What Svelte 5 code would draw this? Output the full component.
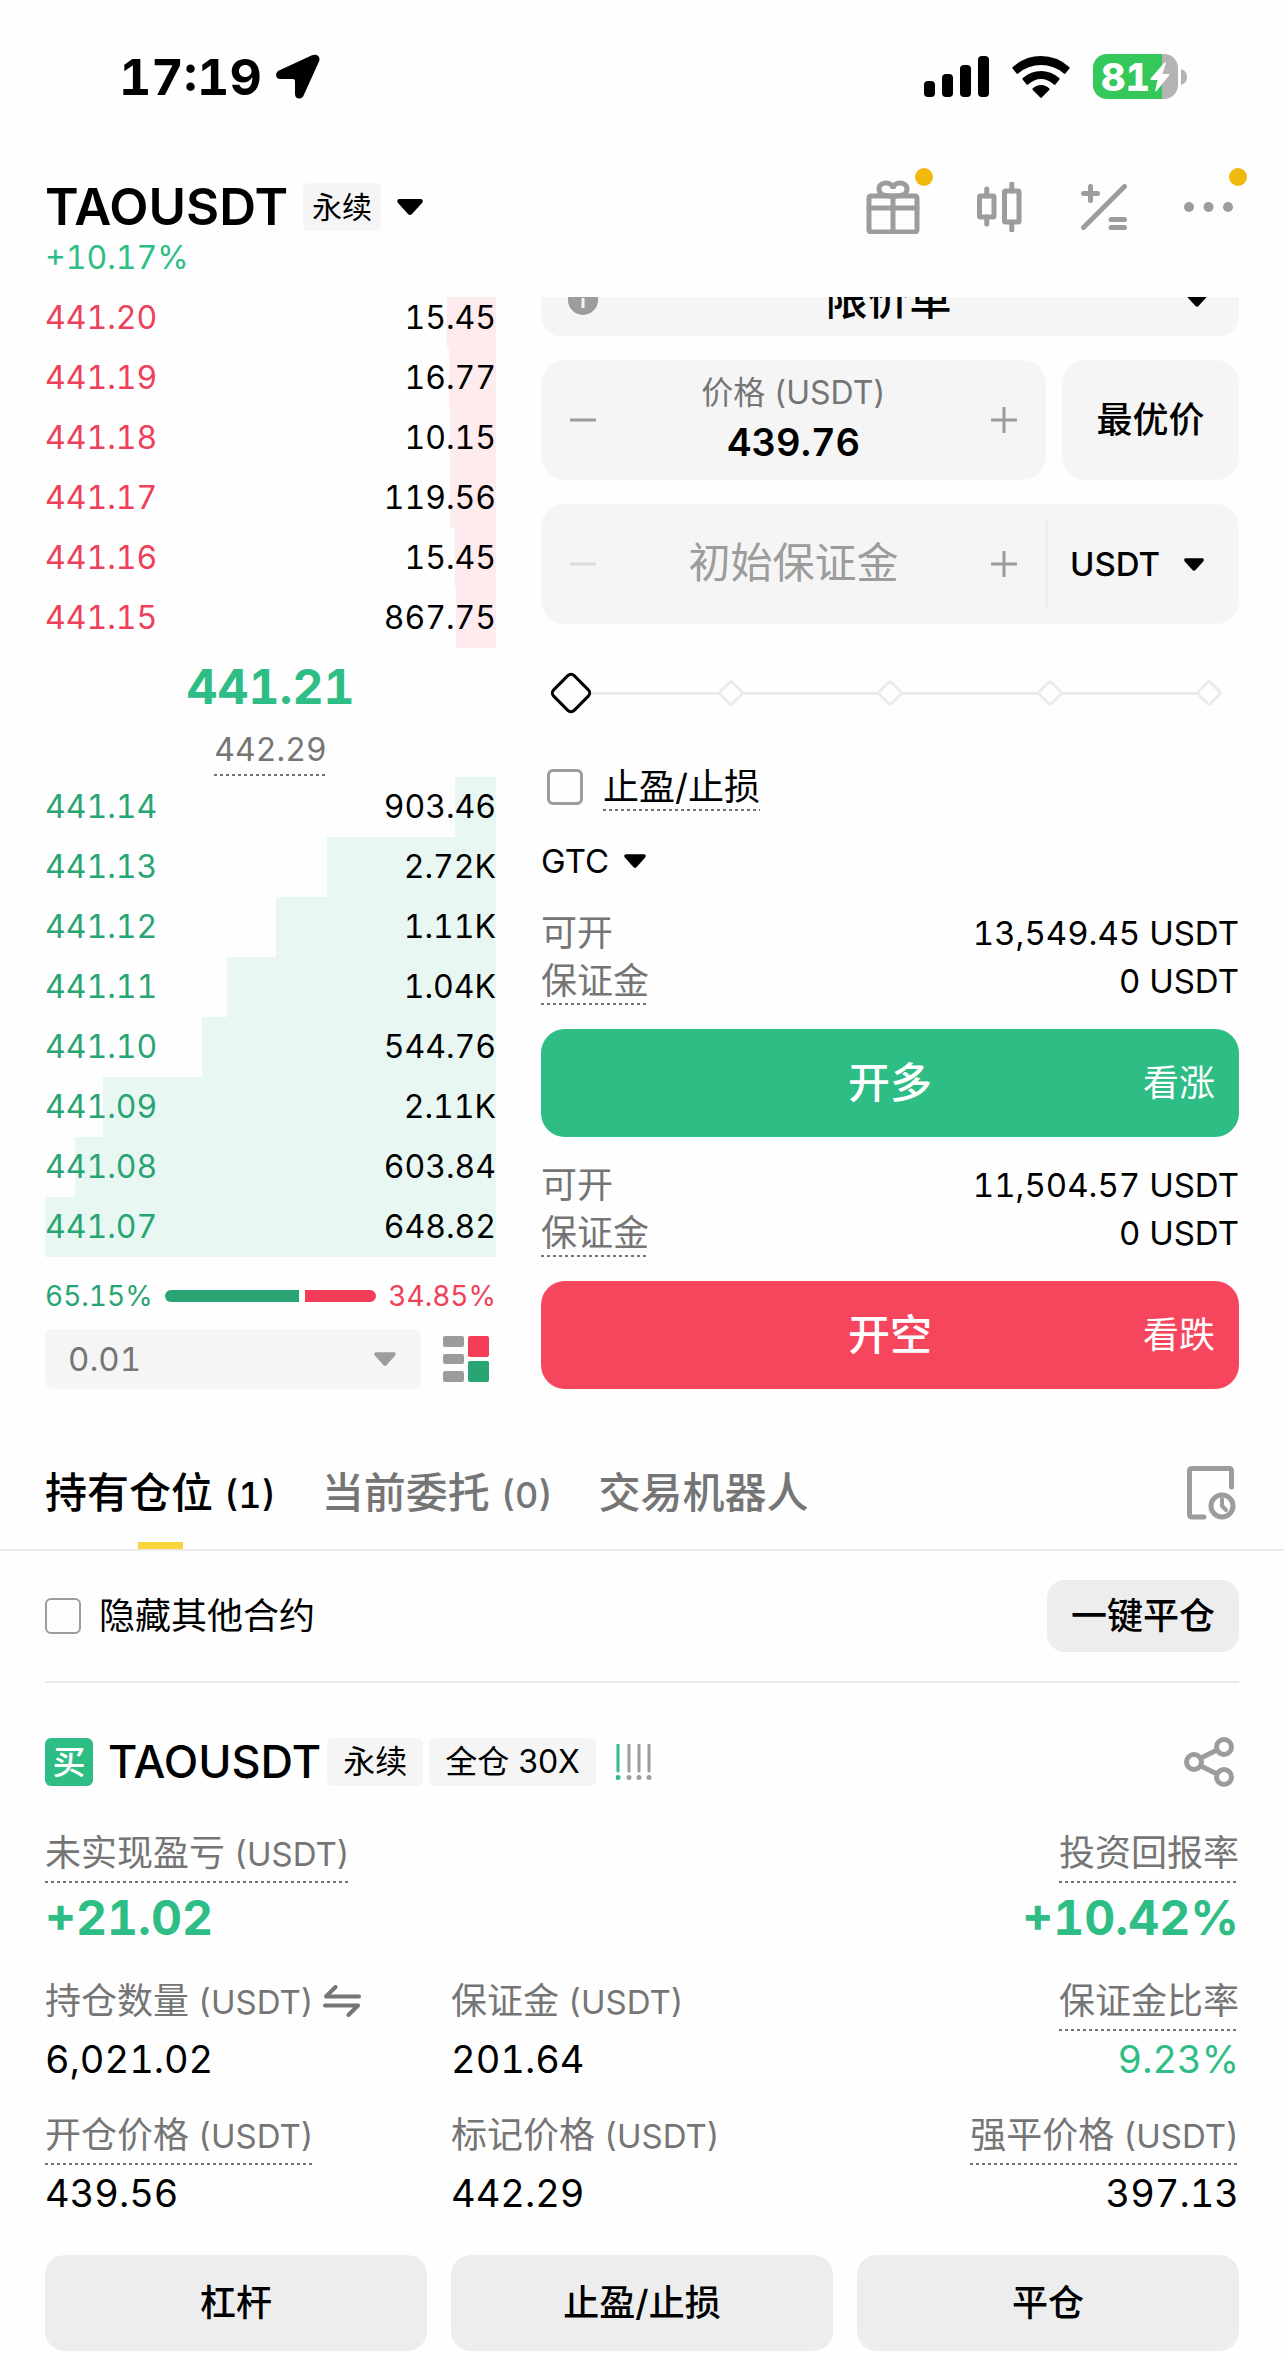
<script lang="ts">
	interface Level {
		price: string;
		amount: string;
		depth: number;
	}

	interface Stat {
		label: string;
		unit?: string;
		value: string;
		hint?: boolean;
		swap?: boolean;
		up?: boolean;
	}

	const asks: Level[] = [
		{ price: '441.20', amount: '15.45', depth: 10.9 },
		{ price: '441.19', amount: '16.77', depth: 10.6 },
		{ price: '441.18', amount: '10.15', depth: 10.4 },
		{ price: '441.17', amount: '119.56', depth: 10.4 },
		{ price: '441.16', amount: '15.45', depth: 9.1 },
		{ price: '441.15', amount: '867.75', depth: 8.9 }
	];

	const bids: Level[] = [
		{ price: '441.14', amount: '903.46', depth: 9.3 },
		{ price: '441.13', amount: '2.72K', depth: 37.5 },
		{ price: '441.12', amount: '1.11K', depth: 48.8 },
		{ price: '441.11', amount: '1.04K', depth: 59.6 },
		{ price: '441.10', amount: '544.76', depth: 65.2 },
		{ price: '441.09', amount: '2.11K', depth: 87.1 },
		{ price: '441.08', amount: '603.84', depth: 93.4 },
		{ price: '441.07', amount: '648.82', depth: 100 }
	];

	const sides = [
		{ type: 'long', available: '13,549.45 USDT', margin: '0 USDT', text: '开多', note: '看涨' },
		{ type: 'short', available: '11,504.57 USDT', margin: '0 USDT', text: '开空', note: '看跌' }
	];

	const tabs = [
		{ text: '持有仓位', count: '(1)' },
		{ text: '当前委托', count: '(0)' },
		{ text: '交易机器人', count: '' }
	];

	const stats: Stat[] = [
		{ label: '持仓数量', unit: '(USDT)', value: '6,021.02', swap: true },
		{ label: '保证金', unit: '(USDT)', value: '201.64' },
		{ label: '保证金比率', value: '9.23%', hint: true, up: true },
		{ label: '开仓价格', unit: '(USDT)', value: '439.56', hint: true },
		{ label: '标记价格', unit: '(USDT)', value: '442.29' },
		{ label: '强平价格', unit: '(USDT)', value: '397.13', hint: true }
	];

	const buyRatio = 65.15;
	const sellRatio = 34.85;

	let activeTab = $state(0);
	let price = $state('439.76');
	let margin = $state('');
	let percent = $state(0);
	let hasTpSl = $state(false);
	let hideOthers = $state(false);

	function stepPrice(delta: number) {
		price = (Number(price) + delta).toFixed(2);
	}

	function stepMargin(delta: number) {
		margin = String(Math.max(0, Number(margin) + delta));
	}
</script>

{#snippet caret(width: number, height: number)}
	<svg class="caret" {width} {height} viewBox="0 0 26 16" aria-hidden="true">
		<path d="M2 0h22q3 1 1 4l-10 11q-2 2-4 0l-10-11q-2-3 1-4z" />
	</svg>
{/snippet}

{#snippet minus()}
	<svg width="26" height="26" viewBox="0 0 26 26" aria-hidden="true">
		<path d="M1 13h24" />
	</svg>
{/snippet}

{#snippet plus()}
	<svg width="26" height="26" viewBox="0 0 26 26" aria-hidden="true">
		<path d="M1 13h24M13 1v24" />
	</svg>
{/snippet}

{#snippet levels(rows: Level[], type: string)}
	<table class="levels {type}">
		<tbody>
			{#each rows as { price, amount, depth }}
				<tr style="--depth: {depth}%">
					<td class="price">{price}</td>
					<td class="amount">{amount}</td>
				</tr>
			{/each}
		</tbody>
	</table>
{/snippet}

<div class="status">
	<div class="clock">
		<span>17:19</span>
		<svg width="44" height="45" viewBox="0 0 44 45" aria-hidden="true">
			<path
				d="M36 1.2 3 16.6C-1.5 18.8-.6 25 4.2 25H17q2 0 2 2v13c0 5.600 6.600 6 8.600 1.400L43 7.600C45 3 41-.8 36 1.200z"
			/>
		</svg>
	</div>
	<div class="signals">
		<svg width="65" height="41" viewBox="0 0 65 41" aria-hidden="true">
			<rect x="0" y="25" width="11" height="16" rx="4" />
			<rect x="18" y="18" width="11" height="23" rx="4" />
			<rect x="36" y="9" width="11" height="32" rx="4" />
			<rect x="54" y="0" width="11" height="41" rx="4" />
		</svg>
		<svg width="58" height="42" viewBox="0 0 58 42" aria-hidden="true">
			<path d="M.6 12.500Q0 11.800.8 11 13 0 29 0t28.200 11q.8.800.2 1.500l-4 5q-.7.800-1.500 0Q42 9 29 9T6.100 17.500q-.8.800-1.500 0z" />
			<path d="M10.600 23.600q-.6-.8.200-1.500Q19 15 29 15t18.200 7.100q.8.700.2 1.500l-4 5q-.7.800-1.500 0Q36 23 29 23t-12.900 5.600q-.8.800-1.500 0z" />
			<path d="M20.600 33.800q-.5-.6.100-1.200Q24 29 29 29t8.300 3.600q.6.600.1 1.200l-7.400 7.500q-1 1-2 0z" />
		</svg>
		<div class="power">
			<div class="battery">
				<span>81</span>
				<svg width="20" height="30" viewBox="0 0 20 30" aria-hidden="true">
					<path d="M14.500.5q1.500-1 1.300.8L12.500 12H18.500q1.500.2.600 1.500L6.500 29q-1.500 1.200-1.200-.7L7.500 18H1.300Q-.2 17.700.8 16.300z" />
				</svg>
			</div>
			<svg width="6" height="16" viewBox="0 0 6 16" aria-hidden="true">
				<path d="M0 0q6 2 6 8t-6 8z" fill="#b3b3b3" />
			</svg>
		</div>
	</div>
</div>

<header>
	<div class="pair">
		<h1>TAOUSDT</h1>
		<span class="tag small">永续</span>
		<button type="button" class="plain" aria-label="切换合约">{@render caret(26, 16)}</button>
	</div>
	<div class="tools">
		<button type="button" class="plain badged" aria-label="活动">
			<svg width="54" height="54" viewBox="0 0 54 54" aria-hidden="true">
				<rect x="3" y="16" width="48" height="36" rx="2" />
				<path d="M3 28h48M27 16v36M27 16c-6 0-14 0-14-7 0-8 14-8 14 0 0-8 14-8 14 0 0 7-8 7-14 7z" />
			</svg>
		</button>
		<button type="button" class="plain" aria-label="K线">
			<svg width="47" height="50" viewBox="0 0 47 50" aria-hidden="true">
				<rect x="2.500" y="14" width="14.500" height="21" rx="1" />
				<rect x="27.500" y="9" width="14.500" height="31" rx="1" />
				<path d="M9.750 7v7M9.750 35v7M34.750 2v7M34.750 40v8" />
			</svg>
		</button>
		<button type="button" class="plain" aria-label="计算器">
			<svg width="46" height="46" viewBox="0 0 46 46" aria-hidden="true">
				<path d="M2.500 43.500 43.500 2.500M9.500 2.500v14M2.500 9.500h14M30 35.500h13.500M30 43.500h13.500" />
			</svg>
		</button>
		<button type="button" class="plain badged" aria-label="更多">
			<svg class="dots" width="50" height="10" viewBox="0 0 50 10" aria-hidden="true">
				<circle cx="5" cy="5" r="5" />
				<circle cx="24.500" cy="5" r="5" />
				<circle cx="44" cy="5" r="5" />
			</svg>
		</button>
	</div>
	<p class="change">+10.17%</p>
</header>

<main>
	<div class="trade">
		<section class="book" aria-label="盘口">
			{@render levels(asks, 'ask')}
			<div class="mid">
				<strong>441.21</strong>
				<span class="hint">442.29</span>
			</div>
			{@render levels(bids, 'bid')}
			<div class="ratio">
				<span class="buy">{buyRatio}%</span>
				<div class="bar">
					<i class="buy" style="flex-grow: {buyRatio}"></i>
					<i class="sell" style="flex-grow: {sellRatio}"></i>
				</div>
				<span class="sell">{sellRatio}%</span>
			</div>
			<div class="precision">
				<label class="dropdown">
					<select aria-label="价格精度">
						<option>0.01</option>
					</select>
					{@render caret(22, 14)}
				</label>
				<button type="button" class="plain" aria-label="盘口样式">
					<svg width="46" height="46" viewBox="0 0 46 46" aria-hidden="true">
						<g fill="#9c9c9c">
							<rect x="0" y="0" width="21" height="11" rx="2" />
							<rect x="0" y="18" width="21" height="10" rx="2" />
							<rect x="0" y="35" width="21" height="11" rx="2" />
						</g>
						<rect x="25" y="0" width="21" height="21" rx="2" fill="#f63d57" />
						<rect x="25" y="25" width="21" height="21" rx="2" fill="#29a573" />
					</svg>
				</button>
			</div>
		</section>

		<form class="order" onsubmit={(event) => event.preventDefault()}>
			<label class="dropdown type">
				<svg width="30" height="30" viewBox="0 0 30 30" aria-hidden="true">
					<circle cx="15" cy="15" r="15" fill="#9c9c9c" />
					<path d="M15 7v3M15 13v10" stroke="#f5f5f5" stroke-width="3" />
				</svg>
				<select aria-label="委托类型">
					<option>限价单</option>
				</select>
				{@render caret(20, 13)}
			</label>

			<div class="price-row">
				<div class="stepper">
					<button type="button" class="plain" aria-label="减" onclick={() => stepPrice(-0.01)}>
						{@render minus()}
					</button>
					<div class="field">
						<label for="price">价格 (USDT)</label>
						<input id="price" type="text" inputmode="decimal" bind:value={price} />
					</div>
					<button type="button" class="plain" aria-label="加" onclick={() => stepPrice(0.01)}>
						{@render plus()}
					</button>
				</div>
				<button type="button" class="best">最优价</button>
			</div>

			<div class="margin-row">
				<div class="stepper">
					<button
						type="button"
						class="plain"
						aria-label="减"
						disabled={margin === ''}
						onclick={() => stepMargin(-1)}
					>
						{@render minus()}
					</button>
					<div class="field">
						<input
							type="text"
							inputmode="decimal"
							aria-label="初始保证金"
							placeholder="初始保证金"
							bind:value={margin}
						/>
					</div>
					<button type="button" class="plain" aria-label="加" onclick={() => stepMargin(1)}>
						{@render plus()}
					</button>
				</div>
				<label class="dropdown unit">
					<select aria-label="单位">
						<option>USDT</option>
					</select>
					{@render caret(20, 13)}
				</label>
			</div>

			<div class="slider">
				<div class="marks">
					{#each [0, 25, 50, 75, 100] as mark (mark)}
						<i></i>
					{/each}
				</div>
				<input type="range" min="0" max="100" aria-label="仓位比例" bind:value={percent} />
			</div>

			<div class="check">
				<input id="tpsl" type="checkbox" bind:checked={hasTpSl} />
				<label for="tpsl" class="hint">止盈/止损</label>
			</div>

			<label class="dropdown force">
				<select aria-label="有效方式">
					<option>GTC</option>
				</select>
				{@render caret(22, 14)}
			</label>

			{#each sides as { type, available, margin, text, note }}
				<dl>
					<div>
						<dt>可开</dt>
						<dd>{available}</dd>
					</div>
					<div>
						<dt class="hint">保证金</dt>
						<dd>{margin}</dd>
					</div>
				</dl>
				<button type="button" class="submit {type}">
					<span>{text}</span>
					<small>{note}</small>
				</button>
			{/each}
		</form>
	</div>

	<nav>
		{#each tabs as { text, count }, index}
			<button
				type="button"
				class="tab"
				class:active={activeTab === index}
				onclick={() => (activeTab = index)}
			>
				{text}
				{#if count}<span class="count">{count}</span>{/if}
			</button>
		{/each}
		<button type="button" class="plain history" aria-label="历史记录">
			<svg width="50" height="54" viewBox="0 0 50 54" aria-hidden="true">
				<path d="M18 51H6q-2.500 0-2.500-2.500V5Q3.500 2.500 6 2.500h37q2.500 0 2.500 2.500v16" />
				<circle cx="36" cy="40" r="11" />
				<path d="M36 33v7l4 4" stroke-width="4" />
			</svg>
		</button>
	</nav>

	<div class="filter">
		<div class="check thin">
			<input id="hide-others" type="checkbox" bind:checked={hideOthers} />
			<label for="hide-others">隐藏其他合约</label>
		</div>
		<button type="button" class="close-all">一键平仓</button>
	</div>

	<section class="position">
		<div class="title">
			<span class="side">买</span>
			<h2>TAOUSDT</h2>
			<span class="tag">永续</span>
			<span class="tag">全仓 30X</span>
			<svg width="36" height="36" viewBox="0 0 36 36" aria-hidden="true">
				{#each [2, 13, 23, 33] as x, index}
					<g class="risk" class:on={index === 0}>
						<path d="M{x} 1v26" />
						<circle cx={x} cy="33.500" r="2.500" />
					</g>
				{/each}
			</svg>
			<button type="button" class="plain share" aria-label="分享">
				<svg width="50" height="50" viewBox="0 0 50 50" aria-hidden="true">
					<circle cx="10" cy="25" r="7.500" />
					<circle cx="40" cy="10" r="7.500" />
					<circle cx="40" cy="40" r="7.500" />
					<path d="m17 21 16-8M17 29l16 8" />
				</svg>
			</button>
		</div>

		<div class="pnl">
			<div>
				<span class="label hint">未实现盈亏 <span class="latin">(USDT)</span></span>
				<strong>+21.02</strong>
			</div>
			<div>
				<span class="label hint">投资回报率</span>
				<strong>+10.42%</strong>
			</div>
		</div>

		<div class="stats">
			{#each stats as { label, unit, value, hint, swap, up }}
				<div class="stat">
					<span class="label" class:hint>
						{label}
						{#if unit}<span class="latin">{unit}</span>{/if}
						{#if swap}
							<svg width="38" height="32" viewBox="0 0 38 32" aria-hidden="true">
								<path d="M36 11.500H3L12.500 2M2 20.500h33L25.500 30" />
							</svg>
						{/if}
					</span>
					<span class="value" class:up>{value}</span>
				</div>
			{/each}
		</div>

		<div class="actions">
			<button type="button">杠杆</button>
			<button type="button">止盈/止损</button>
			<button type="button">平仓</button>
		</div>
	</section>
</main>

<style>
	:global(body) {
		--green: #2ebd85;
		--green-deep: #29a573;
		--red: #f6465d;
		--grey: #757575;
		--grey-light: #9c9c9c;
		--field: #f5f5f5;
		--button: #ededed;
		background-color: #fefefe;
		color: #000;
		font-family: Inter, 'Noto Sans CJK SC', sans-serif;
		font-size: 33px;
		font-variant-numeric: tabular-nums;
		line-height: 48px;
	}

	button,
	input,
	select {
		background: none;
		border: none;
		border-radius: 0;
		box-sizing: border-box;
		color: inherit;
		font: inherit;
		font-variant-numeric: tabular-nums;
		margin: 0;
		min-width: 0;
		outline: none;
		padding: 0;
	}

	select {
		appearance: none;
	}

	button {
		cursor: pointer;
	}

	h1,
	h2,
	p,
	dl,
	dd {
		margin: 0;
	}

	svg {
		display: block;
		flex: none;
	}

	.plain {
		display: flex;
		align-items: center;
	}

	.caret {
		fill: currentColor;
		pointer-events: none;
	}

	.latin {
		font-size: 33px;
		line-height: 1;
	}

	.hint {
		background: repeating-linear-gradient(to right, var(--grey) 0 3px, transparent 3px 6px) left
			bottom / 100% 2px no-repeat;
	}

	.status {
		display: flex;
		align-items: center;
		justify-content: space-between;
		height: 153px;
		padding: 0 97px 0 119px;
	}

	.clock {
		display: flex;
		align-items: center;
		gap: 14px;
		font-size: 50px;
		font-weight: 700;
	}

	.signals {
		display: flex;
		align-items: center;
		gap: 23px;
	}

	.power {
		display: flex;
		align-items: center;
		gap: 3px;
	}

	.battery {
		background: linear-gradient(to right, #34c759 81%, #b3b3b3 81%);
		border-radius: 14px;
		color: #fff;
		display: flex;
		align-items: center;
		justify-content: center;
		font-size: 38px;
		font-weight: 800;
		height: 45px;
		width: 85px;

		& svg {
			fill: #fff;
		}
	}

	header {
		display: grid;
		grid-template-columns: 1fr auto;
		padding: 30px 45px 12px;
	}

	.pair {
		display: flex;
		align-items: center;

		& .plain {
			margin-left: 16px;
		}
	}

	h1 {
		font-size: 51px;
		font-weight: 600;
		margin-right: 15px;
	}

	.tag {
		background-color: var(--field);
		border-radius: 6px;
		font-size: 32px;
		font-variant-numeric: normal;
		padding: 0 16px;

		&.small {
			font-size: 30px;
			padding: 0 9px;
		}
	}

	.tools {
		display: flex;
		align-items: center;
		gap: 57px;
		height: 48px;
		padding-right: 5px;

		& svg {
			fill: none;
			stroke: var(--grey-light);
			stroke-linecap: round;
			stroke-width: 5;
		}

		& .dots {
			fill: var(--grey-light);
			stroke: none;
		}
	}

	.badged {
		height: 48px;
		position: relative;

		&::after {
			background-color: #f0b90b;
			border-radius: 50%;
			content: '';
			height: 18px;
			position: absolute;
			right: -13px;
			top: -15px;
			width: 18px;
		}
	}

	.change {
		color: var(--green);
		font-size: 32px;
		line-height: 54px;
	}

	.trade {
		display: grid;
		grid-template-columns: minmax(0, 451fr) minmax(0, 698fr);
		gap: 45px;
		overflow: hidden;
		padding: 0 45px;
	}

	/* both columns are scrolled slightly under the header */
	.book {
		font-size: 32px;
		margin-top: -9px;
	}

	.levels {
		border-collapse: collapse;
		line-height: 60px;
		width: 100%;

		& tr {
			background: linear-gradient(to left, var(--depth-color) var(--depth), transparent var(--depth));
		}

		& td {
			padding: 0;
		}

		& .amount {
			text-align: right;
		}

		&.ask {
			--depth-color: #feebee;
		}

		&.bid {
			--depth-color: #e9f7f2;
		}

		&.ask .price {
			color: #ee4059;
		}

		&.bid .price {
			color: var(--green-deep);
		}
	}

	.mid {
		display: flex;
		flex-direction: column;
		align-items: center;
		padding-bottom: 1px;

		& strong {
			color: var(--green);
			font-size: 48px;
			font-weight: 700;
			line-height: 78px;
		}

		& span {
			color: var(--grey);
			padding-bottom: 2px;
		}
	}

	.ratio {
		display: flex;
		align-items: center;
		gap: 12px;
		font-size: 28px;
		line-height: 66px;
		margin-top: 6px;

		& span.buy {
			color: var(--green-deep);
		}

		& span.sell {
			color: #ee4059;
		}
	}

	.bar {
		display: flex;
		flex: 1;
		gap: 6px;

		& i {
			flex-basis: 0;
			height: 12px;
		}

		& .buy {
			background-color: var(--green-deep);
			border-radius: 6px 0 0 6px;
		}

		& .sell {
			background-color: #f63d57;
			border-radius: 0 6px 6px 0;
		}
	}

	.dropdown {
		display: flex;
		align-items: center;
	}

	.precision {
		display: flex;
		align-items: center;
		gap: 22px;
		padding-right: 7px;

		& .dropdown {
			background-color: var(--field);
			border-radius: 8px;
			color: var(--grey);
			flex: 1;
			font-size: 33px;
			height: 60px;
			padding: 0 25px 0 23px;
		}

		& select {
			flex: 1;
		}

		& .caret {
			color: var(--grey-light);
		}
	}

	.order {
		display: flex;
		flex-direction: column;
		margin-top: -33px;
	}

	.type {
		background-color: var(--field);
		border-radius: 20px;
		height: 72px;
		padding: 0 32px 0 27px;

		& select {
			flex: 1;
			font-size: 42px;
			font-weight: 500;
			line-height: 60px;
			margin-right: 8px;
			text-align: center;
			text-align-last: center;
		}
	}

	.price-row {
		display: grid;
		grid-template-columns: minmax(0, 505fr) minmax(0, 177fr);
		gap: 16px;
		margin: 24px 0;
	}

	.stepper,
	.best {
		background-color: var(--field);
		border-radius: 24px;
		height: 120px;
	}

	.best {
		font-size: 36px;
		font-weight: 500;
	}

	.stepper {
		display: flex;
		align-items: center;
		justify-content: space-between;
		padding: 0 29px;

		& svg {
			stroke: var(--grey-light);
			stroke-linecap: round;
			stroke-width: 3;
		}

		& button:disabled svg {
			stroke: #dcdcdc;
		}
	}

	.field {
		display: flex;
		flex: 1;
		flex-direction: column;
		min-width: 0;
		text-align: center;

		& label {
			color: var(--grey);
			font-size: 32px;
			line-height: 44px;
		}

		& input {
			font-size: 38px;
			font-weight: 600;
			height: 54px;
			text-align: center;
			width: 100%;
		}

		& input::placeholder {
			color: var(--grey-light);
			font-size: 42px;
			font-weight: 400;
			opacity: 1;
		}
	}

	.margin-row {
		background-color: var(--field);
		border-radius: 24px;
		display: grid;
		grid-template-columns: minmax(0, 505fr) minmax(0, 193fr);
		align-items: center;
	}

	.unit {
		border-left: 2px solid var(--button);
		font-weight: 500;
		height: 88px;
		justify-content: space-between;
		padding: 0 35px 0 22px;
	}

	.slider {
		align-items: center;
		display: grid;
		height: 48px;
		margin: 45px 14px 46px;

		& > * {
			grid-area: 1 / 1;
		}

		& input {
			appearance: none;
			width: 100%;
		}

		& input::-webkit-slider-thumb {
			appearance: none;
			background-color: #fefefe;
			border: 3px solid #000;
			border-radius: 6px;
			box-sizing: border-box;
			height: 32px;
			rotate: 45deg;
			width: 32px;
		}
	}

	.marks {
		background: linear-gradient(#ebebeb, #ebebeb) center / calc(100% - 32px) 3px no-repeat;
		display: flex;
		justify-content: space-between;
		padding: 0 6px;

		& i {
			background-color: #fefefe;
			border: 3px solid #ebebeb;
			border-radius: 4px;
			box-sizing: border-box;
			height: 20px;
			rotate: 45deg;
			width: 20px;
		}
	}

	.check {
		display: flex;
		align-items: center;
		gap: 20px;
		font-size: 36px;

		& input {
			appearance: none;
			border: 3px solid var(--grey-light);
			border-radius: 6px;
			height: 36px;
			width: 36px;
		}

		& input:checked {
			background-color: var(--grey-light);
		}

		&.thin {
			gap: 18px;
		}

		&.thin input {
			border-width: 2px;
		}
	}

	.order .check {
		padding-left: 6px;
	}

	.force {
		gap: 14px;
		margin: 26px 0 0;
	}

	dl {
		margin-top: 24px;

		& div {
			display: flex;
			justify-content: space-between;
		}

		& dt {
			color: var(--grey);
			font-size: 36px;
		}
	}

	.submit {
		border-radius: 24px;
		color: #fff;
		display: grid;
		grid-template-columns: 1fr auto 1fr;
		align-items: center;
		font-size: 42px;
		font-weight: 500;
		height: 108px;
		margin-top: 24px;
		padding: 0 24px;

		& span {
			grid-column: 2;
		}

		& small {
			font-size: 36px;
			font-weight: 400;
			text-align: right;
		}

		&.long {
			background-color: var(--green);
		}

		&.short {
			background-color: var(--red);
		}
	}

	nav {
		border-bottom: 2px solid #ebebeb;
		display: flex;
		align-items: center;
		gap: 46px;
		height: 112px;
		margin-top: 48px;
		padding: 0 45px;
	}

	.tab {
		color: var(--grey);
		font-size: 42px;
		font-weight: 500;
		height: 100%;
		position: relative;

		&.active {
			color: #000;
		}

		&.active::after {
			background-color: #fbd33c;
			bottom: 0;
			content: '';
			height: 7px;
			left: calc(50% - 22px);
			position: absolute;
			width: 45px;
		}
	}

	.count {
		font-size: 36px;
		line-height: 1;
	}

	.history {
		margin-left: auto;
		padding-right: 3px;
	}

	.history svg,
	.share svg,
	.label svg {
		fill: none;
		stroke: var(--grey-light);
		stroke-linecap: round;
		stroke-linejoin: round;
		stroke-width: 5;
	}

	.filter {
		border-bottom: 2px solid #ebebeb;
		display: flex;
		align-items: center;
		justify-content: space-between;
		margin: 0 45px;
		padding: 29px 0;
	}

	.close-all {
		background-color: var(--button);
		border-radius: 18px;
		font-size: 36px;
		font-weight: 500;
		height: 72px;
		padding: 0 24px;
	}

	.position {
		padding: 55px 45px 10px;
	}

	.title {
		display: flex;
		align-items: center;
		gap: 6px;
		height: 48px;
		margin-bottom: 46px;

		& h2 {
			font-size: 45px;
			font-weight: 500;
			margin-left: 9px;
		}

		& > svg {
			margin-left: 14px;
		}

		& .share {
			margin-left: auto;
			padding-right: 5px;
		}
	}

	.side {
		background-color: var(--green);
		border-radius: 6px;
		color: #fff;
		font-weight: 500;
		text-align: center;
		width: 48px;
	}

	.risk {
		fill: var(--grey-light);
		stroke: var(--grey-light);
		stroke-linecap: round;
		stroke-width: 3;

		& circle {
			stroke: none;
		}

		&.on {
			fill: var(--green);
			stroke: var(--green);
		}
	}

	.pnl {
		display: flex;
		justify-content: space-between;

		& div {
			display: flex;
			flex-direction: column;
			align-items: flex-start;
		}

		& div:last-child {
			align-items: flex-end;
		}

		& strong {
			color: var(--green);
			font-size: 48px;
			font-weight: 700;
			line-height: 62px;
		}
	}

	.label {
		color: var(--grey);
		display: flex;
		align-items: baseline;
		gap: 9px;
		font-size: 36px;
		line-height: 42px;
		margin-bottom: 4px;
		padding-bottom: 9px;
		white-space: nowrap;

		& svg {
			align-self: center;
			stroke: var(--grey);
			stroke-width: 4;
		}
	}

	.stats {
		display: grid;
		grid-template-columns: repeat(3, 1fr);
		gap: 31px 24px;
		margin-top: 31px;
	}

	.stat {
		display: flex;
		flex-direction: column;
		align-items: flex-start;

		&:nth-child(3n) {
			align-items: flex-end;
		}
	}

	.value {
		font-size: 38px;

		&.up {
			color: var(--green);
		}
	}

	.actions {
		display: grid;
		grid-template-columns: repeat(3, 1fr);
		gap: 24px;
		margin-top: 38px;

		& button {
			background-color: var(--button);
			border-radius: 20px;
			font-size: 36px;
			font-weight: 500;
			height: 96px;
		}
	}
</style>
